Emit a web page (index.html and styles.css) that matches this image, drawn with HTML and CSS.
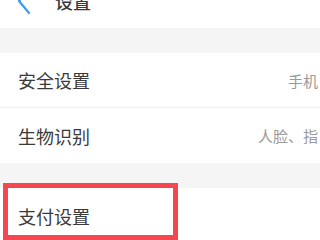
FILE: index.html
```html
<!DOCTYPE html>
<html lang="zh-CN">
<head>
<meta charset="utf-8">
<link rel="stylesheet" href="styles.css">
</head>
<body>
<div class="screen">
  <header class="topbar">
    <svg class="back" width="16" height="28" viewBox="0 0 16 28">
      <path d="M13 2 L3 14 L13 26" fill="none" stroke="#3d9be9" stroke-width="2.2" stroke-linecap="round" stroke-linejoin="round"/>
    </svg>
    <span class="title">设置</span>
  </header>
  <div class="gap"></div>
  <div class="row row-line">
    <span class="label">安全设置</span>
    <span class="value">手机</span>
  </div>
  <div class="row">
    <span class="label">生物识别</span>
    <span class="value">人脸、指</span>
  </div>
  <div class="gap"></div>
  <div class="row">
    <span class="label">支付设置</span>
  </div>
  <div class="highlight"></div>
</div>
</body>
</html>
```

FILE: styles.css
```css
html, body {
  margin: 0;
  padding: 0;
  background: #ffffff;
}
.screen {
  position: relative;
  width: 320px;
  height: 240px;
  overflow: hidden;
  font-family: "Noto Sans CJK SC", "Noto Sans", sans-serif;
  color: #3a3a3a;
}
.topbar {
  height: 55px;
  margin-top: -27px;
  display: flex;
  align-items: center;
  padding-left: 16px;
}
.back {
  display: block;
}
.title {
  margin-left: 23px;
  font-size: 18px;
  line-height: 1;
  color: #3a3a3a;
  font-weight: 500;
}
.gap {
  height: 25px;
  background: #f5f5f5;
}
.row {
  height: 55px;
  display: flex;
  align-items: center;
  justify-content: space-between;
  padding-left: 18px;
  padding-right: 2px;
  box-sizing: border-box;
}
.row-line {
  border-bottom: 1px solid #eeeeee;
}
.label {
  font-size: 18px;
  line-height: 1;
  color: #3a3a3a;
}
.value {
  font-size: 15px;
  line-height: 1;
  color: #9a9a9a;
  white-space: nowrap;
}
.highlight {
  position: absolute;
  left: 3px;
  top: 183px;
  width: 175px;
  height: 57px;
  box-sizing: border-box;
  border: 5px solid #f5474f;
}
```
